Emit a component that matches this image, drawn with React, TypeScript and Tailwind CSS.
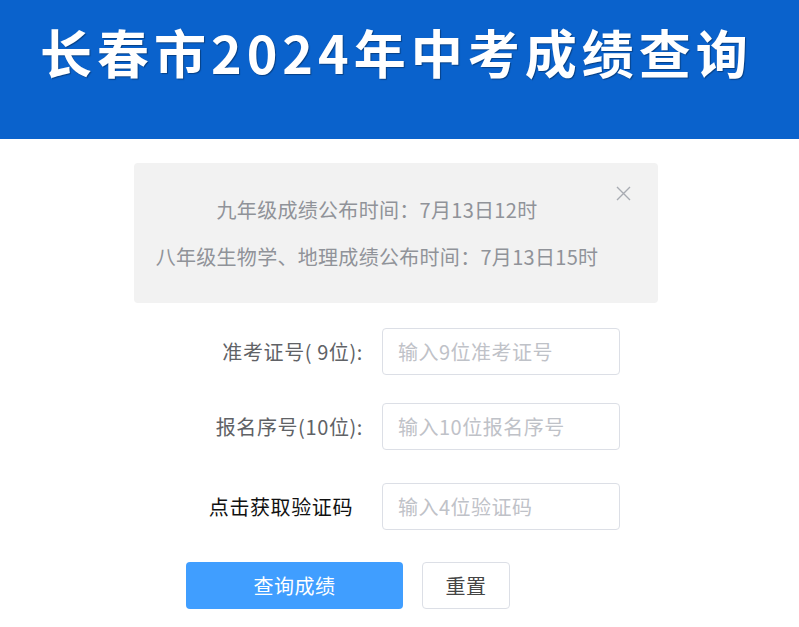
import React from "react";

const font = { fontFamily: '"Microsoft YaHei", "Noto Sans CJK SC", "Noto Sans", sans-serif' };

function Row({ label, placeholder, dark }: { label: string; placeholder: string; dark?: boolean }) {
  return (
    <div className="flex items-center">
      <div
        className={`w-[229px] text-right text-[20px] leading-none tracking-[0.6px] whitespace-nowrap ${
          dark ? "text-[#111] pr-[10px]" : "text-[#606266]"
        }`}
      >
        {label}
      </div>
      <div className="ml-[19px] w-[238px] h-[47px] border border-[#dcdfe6] rounded-[4px] flex items-center px-[15px]">
        <span className="text-[20px] text-[#bfc2c8] leading-none tracking-[0.5px]">{placeholder}</span>
      </div>
    </div>
  );
}

export default function App() {
  return (
    <div className="w-[799px] h-[627px] bg-white overflow-hidden" style={font}>
      <div className="h-[139px] bg-[#0a62cc] pl-[40px] pt-[26px]">
        <h1
          className="text-white font-bold text-[52px] leading-none tracking-[5px] whitespace-nowrap"
          style={{ textShadow: "1px 1px 1px rgba(0,0,0,0.35)" }}
        >
          长春市2024年中考成绩查询
        </h1>
      </div>
      <div className="ml-[134px] w-[524px]">
        <div className="mt-[24px] h-[140px] bg-[#f2f2f2] rounded-[4px] relative flex flex-col items-center justify-center gap-[27px] pl-[20px] pr-[58px] text-[20px] leading-none tracking-[0.3px] text-[#909399]">
          <div className="whitespace-nowrap">九年级成绩公布时间：7月13日12时</div>
          <div className="whitespace-nowrap">八年级生物学、地理成绩公布时间：7月13日15时</div>
          <svg className="absolute left-[482px] top-[23px]" width="15" height="15" viewBox="0 0 15 15">
            <path d="M1 1L14 14M14 1L1 14" stroke="#a8abb2" strokeWidth="1.4" />
          </svg>
        </div>
        <div className="mt-[25px] flex flex-col">
          <Row label="准考证号( 9位):" placeholder="输入9位准考证号" />
          <div className="h-[28px]" />
          <Row label="报名序号(10位):" placeholder="输入10位报名序号" />
          <div className="h-[33px]" />
          <Row label="点击获取验证码" placeholder="输入4位验证码" dark />
        </div>
        <div className="mt-[32px] ml-[52px] flex gap-[19px]">
          <button className="w-[217px] h-[47px] rounded-[4px] bg-[#409eff] text-white text-[20px] leading-none tracking-[0.5px]">
            查询成绩
          </button>
          <button className="w-[88px] h-[47px] rounded-[4px] bg-white border border-[#dcdfe6] text-[#454545] text-[20px] leading-none tracking-[0.5px]">
            重置
          </button>
        </div>
      </div>
    </div>
  );
}
